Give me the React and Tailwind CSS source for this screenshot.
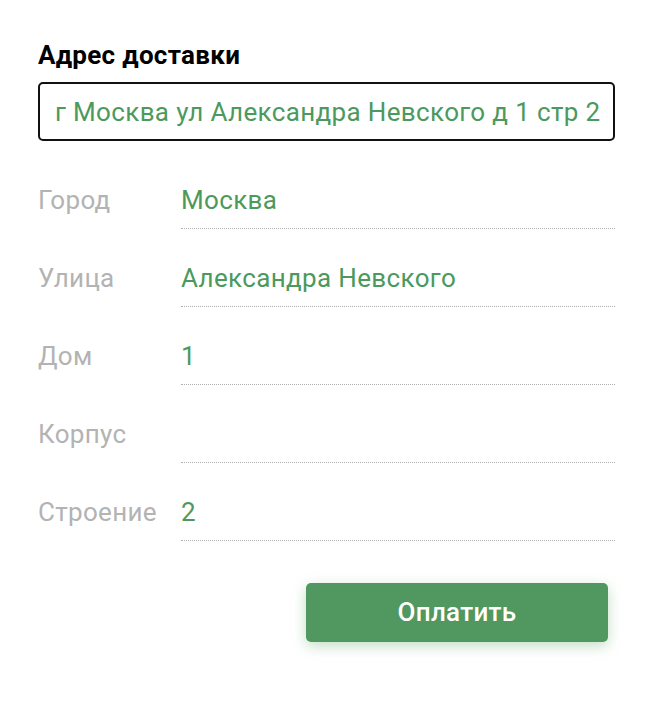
import React from "react";

const fields = [
  { label: "Город", value: "Москва" },
  { label: "Улица", value: "Александра Невского" },
  { label: "Дом", value: "1" },
  { label: "Корпус", value: "" },
  { label: "Строение", value: "2" },
];

export default function App() {
  return (
    <div className="min-h-screen bg-white font-['Roboto',sans-serif]">
      <div className="ml-[38px] w-[577px] pt-[39px]">
        <h2 className="text-[26px] leading-[32px] font-bold text-black tracking-[0.3px]">Адрес доставки</h2>

        <div className="mt-[11px] h-[59px] rounded-[5px] border-2 border-[#111] flex items-center px-[15px]">
          <span className="text-[26px] leading-[32px] text-[#4c995d] tracking-[0.35px] whitespace-nowrap">
            г Москва ул Александра Невского д 1 стр 2
          </span>
        </div>

        <div className="mt-[10px]">
          {fields.map((f) => (
            <div key={f.label} className="flex h-[78px]">
              <div className="w-[143px] pt-[33px] text-[26px] leading-[32px] text-[#b3b3b3] tracking-[0.3px]">
                {f.label}
              </div>
              <div className="flex-1 border-b border-dotted border-[#b0b0b0] pt-[33px] text-[26px] leading-[32px] text-[#4c995d] tracking-[0.35px]">
                {f.value}
              </div>
            </div>
          ))}
        </div>

        <div className="mt-[42px] flex justify-end pr-[7px]">
          <button className="w-[302px] h-[59px] rounded-[5px] bg-[#50985f] text-white text-[26px] font-medium tracking-[0.3px] shadow-[0_4px_14px_rgba(80,160,90,0.35)]">
            Оплатить
          </button>
        </div>
      </div>
    </div>
  );
}
